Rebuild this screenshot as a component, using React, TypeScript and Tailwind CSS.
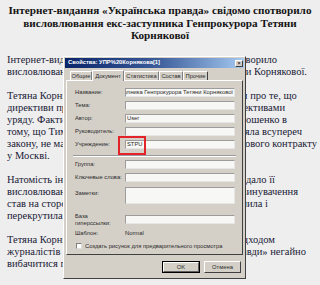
import React from "react";

type Line = { l: string; r?: string; w?: string };

const para: Line[][] = [
  [
    { l: "Інтернет-видання «Українська", r: "правда» свідомо спотворило", w: "w-[270px]" },
    { l: "висловлювання екс-заступника", r: "Генпрокурора Тетяни Корнякової.", w: "w-[300px]" },
  ],
  [
    { l: "Тетяна Корнякова в інтерв'ю", r: "розповідала журналістам про те, що", w: "w-[285px]" },
    { l: "директиви прем'єра щодо", r: "газових угод не були директивами", w: "w-[278px]" },
    { l: "уряду. Фактично вона", r: "стверджувала, що Юлія Тимошенко в", w: "w-[280px]" },
    { l: "тому, що Тимошенко", r: "підписала директиви і діяла всупереч", w: "w-[295px]" },
    { l: "закону, не маючи", r: "повноважень для підписання газового контракту", w: "w-[310px]" },
    { l: "у Москві." },
  ],
  [
    { l: "Натомість інтернет-видання", r: "перекрутило та видало її", w: "w-[268px]" },
    { l: "висловлювання як", r: "підтвердження безпідставності обвинувачення", w: "w-[291px]" },
    { l: "став на сторону захисту,", r: "яка це заперечила і", w: "w-[261px]" },
    { l: "перекрутила її слова." },
  ],
  [
    { l: "Тетяна Корнякова обурена", r: "таким журналістським підходом", w: "w-[268px]" },
    { l: "журналістів «Української", r: "правди» негайно", w: "w-[299px]" },
    { l: "вибачитися перед нею." },
  ],
];

function Field({ label, value, alignEnd = false }: { label: string; value?: string; alignEnd?: boolean }) {
  return (
    <div className="flex items-center">
      <div className="w-[50px] leading-[7px]">{label}</div>
      <div
        className={`w-[110px] h-[9px] flex items-center overflow-hidden bg-[#f7f7f5] border border-[#9c9c9c] border-b-[#e6e6e6] border-r-[#e6e6e6] px-[1px] whitespace-nowrap ${alignEnd ? "justify-end" : "justify-start"}`}
      >
        {value}
      </div>
    </div>
  );
}

export default function App() {
  return (
    <div className="relative w-[320px] h-[285px] overflow-hidden bg-[#eeeeee] [font-family:'Liberation_Serif','Times_New_Roman',serif]">
      <h1 className="pt-[4px] text-center font-bold text-[11.2px] leading-[12.5px] text-[#141414] whitespace-nowrap">
        Інтернет-видання «Українська правда» свідомо спотворило
        <br />
        висловлювання екс-заступника Генпрокурора Тетяни
        <br />
        Корнякової
      </h1>
      <div className="mt-[12px] pl-[7px] text-[10.5px] leading-[12px] text-[#1a1a36] whitespace-nowrap">
        {para.map((p, i) => (
          <div key={i} className="mb-[12px]">
            {p.map((line, j) =>
              line.r ? (
                <div key={j} className={`flex justify-between ${line.w}`}>
                  <span>{line.l} </span>
                  <span>{line.r}</span>
                </div>
              ) : (
                <div key={j}>{line.l}</div>
              )
            )}
          </div>
        ))}
      </div>

      {/* dialog */}
      <div className="absolute left-[63px] top-[56px] w-[183px] h-[223px] bg-[#d4d0c8] border border-white border-r-[#404040] border-b-[#404040] p-[1px] flex flex-col [font-family:'Liberation_Sans',Arial,sans-serif] text-[5.8px] text-[#2a2a2a]">
        <div className="h-[10px] flex items-center justify-between pl-[3px] pr-[1px] bg-gradient-to-r from-[#0a246a] via-[#3a5a98] to-[#a6caf0]">
          <span className="font-bold text-white text-[5.8px] leading-none">Свойства: УПР%20Корнякова[1]</span>
          <span className="w-[8px] h-[7px] flex items-center justify-center bg-[#d4d0c8] border border-white border-r-[#404040] border-b-[#404040] text-[6px] leading-none text-black">
            ×
          </span>
        </div>
        {/* tabs */}
        <div className="h-[12px] flex items-end pl-[5px] relative z-10">
          <div className="h-[9px] w-[22px] flex items-center justify-center border border-b-0 border-white border-r-[#808080] rounded-t-[1px]">Общие</div>
          <div className="h-[11px] w-[32px] -mb-[1px] flex items-center justify-center bg-[#d4d0c8] border border-b-0 border-white border-r-[#808080] rounded-t-[1px]">Документ</div>
          <div className="h-[9px] w-[35px] flex items-center justify-center border border-b-0 border-white border-r-[#808080] rounded-t-[1px]">Статистика</div>
          <div className="h-[9px] w-[24px] flex items-center justify-center border border-b-0 border-white border-r-[#808080] rounded-t-[1px]">Состав</div>
          <div className="h-[9px] w-[25px] flex items-center justify-center border border-b-0 border-white border-r-[#404040] rounded-t-[1px]">Прочие</div>
        </div>
        {/* panel */}
        <div className="mx-[1px] h-[175px] border border-white border-r-[#404040] border-b-[#404040] pl-[8px] pt-[7px] flex flex-col">
          <div className="flex flex-col gap-[4px]">
            <Field label="Название:" value="заступника Генпрокурора Тетяни Корнякової" alignEnd />
            <Field label="Тема:" />
            <Field label="Автор:" value="User" />
            <Field label="Руководитель:" />
            <Field label="Учреждение:" value="STPU" />
          </div>
          <div className="mt-[6px] -ml-[2px] w-[163px] h-[2px] border-t border-[#9a9a9a] border-b border-b-white" />
          <div className="mt-[3px]">
            <Field label="Группа:" />
          </div>
          <div className="mt-[4px]">
            <Field label="Ключевые слова:" />
          </div>
          <div className="mt-[5px] flex items-start">
            <div className="w-[50px] pt-[3px] leading-[7px]">Заметки:</div>
            <div className="w-[110px] h-[17px] bg-[#f7f7f5] border border-[#9c9c9c] border-b-[#e6e6e6] border-r-[#e6e6e6]" />
          </div>
          <div className="mt-[11px] flex items-center h-[9px]">
            <div className="w-[50px] leading-[7px]">
              База
              <br />
              гиперссылки:
            </div>
            <div className="w-[110px] h-[9px] bg-[#f7f7f5] border border-[#9c9c9c] border-b-[#e6e6e6] border-r-[#e6e6e6]" />
          </div>
          <div className="mt-[5px] h-[8px] flex items-center">
            <div className="w-[50px]">Шаблон:</div>
            <div>Normal</div>
          </div>
          <div className="mt-[5px] h-[8px] flex items-center ml-[1px] gap-[3px]">
            <div className="w-[6px] h-[6px] bg-white border border-[#808080] border-b-[#e0e0e0] border-r-[#e0e0e0]" />
            <div>Создать рисунок для предварительного просмотра</div>
          </div>
        </div>
        {/* buttons */}
        <div className="mt-[6px] flex justify-end gap-[4px] pr-[3px]">
          <div className="w-[38px] h-[12px] flex items-center justify-center border border-black">
            <div className="w-full h-full flex items-center justify-center border border-white border-r-[#606060] border-b-[#606060]">OK</div>
          </div>
          <div className="w-[37px] h-[12px] flex items-center justify-center border border-white border-r-[#404040] border-b-[#404040]">
            Отмена
          </div>
        </div>
      </div>

      {/* red highlight */}
      <div className="absolute left-[118px] top-[136px] w-[28px] h-[19px] border-2 border-[#e2232a]" />
    </div>
  );
}
